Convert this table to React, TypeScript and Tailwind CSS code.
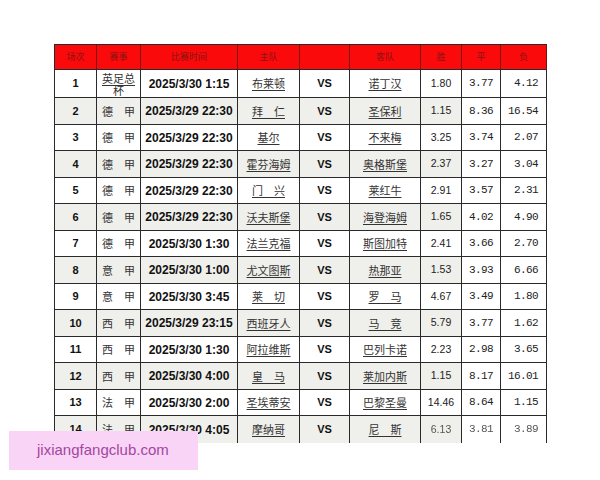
import React from "react";

type Row = [string, string, string, string, string, string, string, string];

const rows: Row[] = [
  ["1", "英足总杯", "2025/3/30 1:15", "布莱顿", "诺丁汉", "1.80", "3.77", "4.12"],
  ["2", "德　甲", "2025/3/29 22:30", "拜　仁", "圣保利", "1.15", "8.36", "16.54"],
  ["3", "德　甲", "2025/3/29 22:30", "基尔", "不来梅", "3.25", "3.74", "2.07"],
  ["4", "德　甲", "2025/3/29 22:30", "霍芬海姆", "奥格斯堡", "2.37", "3.27", "3.04"],
  ["5", "德　甲", "2025/3/29 22:30", "门　兴", "莱红牛", "2.91", "3.57", "2.31"],
  ["6", "德　甲", "2025/3/29 22:30", "沃夫斯堡", "海登海姆", "1.65", "4.02", "4.90"],
  ["7", "德　甲", "2025/3/30 1:30", "法兰克福", "斯图加特", "2.41", "3.66", "2.70"],
  ["8", "意　甲", "2025/3/30 1:00", "尤文图斯", "热那亚", "1.53", "3.93", "6.66"],
  ["9", "意　甲", "2025/3/30 3:45", "莱　切", "罗　马", "4.67", "3.49", "1.80"],
  ["10", "西　甲", "2025/3/29 23:15", "西班牙人", "马　竞", "5.79", "3.77", "1.62"],
  ["11", "西　甲", "2025/3/30 1:30", "阿拉维斯", "巴列卡诺", "2.23", "2.98", "3.65"],
  ["12", "西　甲", "2025/3/30 4:00", "皇　马", "莱加内斯", "1.15", "8.17", "16.01"],
  ["13", "法　甲", "2025/3/30 2:00", "圣埃蒂安", "巴黎圣曼", "14.46", "8.64", "1.15"],
  ["14", "法　甲", "2025/3/30 4:05", "摩纳哥", "尼　斯", "6.13", "3.81", "3.89"],
];

const headers = ["场次", "赛事", "比赛时间", "主队", "", "客队", "胜", "平", "负"];

const gridCols =
  "grid grid-cols-[42px_44px_97px_62px_50px_71px_41px_39px_46px]";

const cjk = "font-['Noto_Sans_CJK_SC',sans-serif]";

function Cell({
  children,
  className = "",
  gray,
}: {
  children?: React.ReactNode;
  className?: string;
  gray?: boolean;
}) {
  return (
    <div
      className={`flex items-center border-r border-[#2a2a2a] ${
        gray ? "bg-[#efefeb]" : "bg-white"
      } ${className}`}
    >
      {children}
    </div>
  );
}

export default function App() {
  return (
    <div className="relative w-[600px] h-[480px] bg-white overflow-hidden">
      <div className="pt-[44px] pl-[54px]">
        <div className="w-[493px] border-t border-l border-[#2a2a2a]">
          <div className={`${gridCols} h-[25px] border-b border-[#2a2a2a] bg-[#fa0a0a]`}>
            {headers.map((h, i) => (
              <div
                key={i}
                className={`flex items-center justify-center border-r border-[#7a1010] ${cjk} text-[9px] text-[#8a1414]`}
              >
                {h}
              </div>
            ))}
          </div>
          {rows.map((r, idx) => {
            const n = idx + 1;
            const gray = n % 2 === 0;
            const last = n === rows.length;
            const h =
              n === 1 ? "h-[28px]" : n % 2 === 0 ? "h-[27px]" : "h-[26px]";
            const blur = last ? "blur-[0.6px] text-[#555]" : "text-[#222]";
            return (
              <div
                key={n}
                className={`${gridCols} ${h} ${last ? "" : "border-b border-[#2a2a2a]"}`}
              >
                <Cell gray={gray} className="justify-center">
                  <span className="font-['Liberation_Sans',sans-serif] font-bold text-[11px] text-[#111]">
                    {r[0]}
                  </span>
                </Cell>
                <Cell gray={gray} className="justify-center px-[4px]">
                  {n === 1 ? (
                    <span
                      className={`${cjk} text-[11px] leading-[12px] text-[#333] underline underline-offset-2 text-center`}
                    >
                      {r[1]}
                    </span>
                  ) : (
                    <span className={`${cjk} text-[11px] text-[#333]`}>{r[1]}</span>
                  )}
                </Cell>
                <Cell gray={gray} className="justify-center">
                  <span className="font-['Liberation_Sans',sans-serif] font-bold text-[12px] text-[#111]">
                    {r[2]}
                  </span>
                </Cell>
                <Cell gray={gray} className="justify-center">
                  <span
                    className={`${cjk} text-[11px] text-[#333] underline underline-offset-2 whitespace-pre`}
                  >
                    {r[3]}
                  </span>
                </Cell>
                <Cell gray={gray} className="justify-center">
                  <span className="font-['Liberation_Sans',sans-serif] font-bold text-[11px] text-[#111]">
                    VS
                  </span>
                </Cell>
                <Cell gray={gray} className="justify-center">
                  <span
                    className={`${cjk} text-[11px] text-[#333] underline underline-offset-2 whitespace-pre`}
                  >
                    {r[4]}
                  </span>
                </Cell>
                <Cell gray={gray} className="justify-center">
                  <span className={`font-['Liberation_Sans',sans-serif] text-[10.5px] ${blur}`}>
                    {r[5]}
                  </span>
                </Cell>
                <Cell className="justify-center">
                  <span
                    className={`font-['Liberation_Mono',monospace] text-[11px] tracking-[-0.6px] ${blur}`}
                  >
                    {r[6]}
                  </span>
                </Cell>
                <Cell className="justify-end pr-[8px]">
                  <span
                    className={`font-['Liberation_Mono',monospace] text-[11px] tracking-[-0.6px] ${blur}`}
                  >
                    {r[7]}
                  </span>
                </Cell>
              </div>
            );
          })}
        </div>
      </div>
      <div className="absolute left-[9px] top-[431px] w-[189px] h-[39px] bg-[#f9d4f6] flex items-center pl-[28px]">
        <span className="font-['Liberation_Sans',sans-serif] text-[15px] text-[#a3479f]">
          jixiangfangclub.com
        </span>
      </div>
    </div>
  );
}
